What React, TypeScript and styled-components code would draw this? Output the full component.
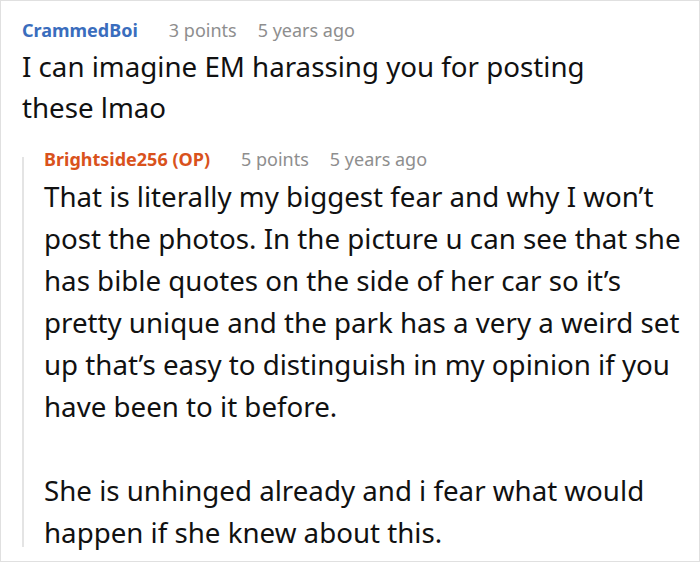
import React from "react";
import styled, { createGlobalStyle } from "styled-components";

const Global = createGlobalStyle`
  html, body { margin: 0; padding: 0; background: #fff; }
  body { font-family: "Noto Sans", "Open Sans", sans-serif; }
`;

const Frame = styled.div`
  box-sizing: border-box;
  width: 700px;
  height: 562px;
  border: 1px solid #e0e0e0;
  padding: 17px 0 0 21px;
  overflow: hidden;
`;

const Meta = styled.div`
  display: flex;
  align-items: baseline;
  gap: 21px;
  font-size: 18px;
  line-height: 24px;
  white-space: nowrap;
`;

const Author = styled.span<{ $tone: "blue" | "orange" }>`
  font-weight: 700;
  margin-right: 10px;
  color: ${(p) => (p.$tone === "blue" ? "#3a6dbd" : "#d9521c")};
`;

const Info = styled.span`
  color: #8e8e8e;
`;

const Body = styled.div<{ $lh: number }>`
  color: #111;
  font-size: 27.7px;
  line-height: ${(p) => p.$lh}px;
  margin-top: 4px;
  white-space: nowrap;
  p { margin: 0; }
  p + p { margin-top: ${(p) => p.$lh}px; }
`;

const Reply = styled.div`
  position: relative;
  margin-top: 19px;
  padding-left: 22px;
  &::before {
    content: "";
    position: absolute;
    left: 0;
    top: 10px;
    bottom: 6px;
    width: 2px;
    background: #e4e4e4;
  }
`;

export default function App() {
  return (
    <>
      <Global />
      <Frame>
        <Meta>
          <Author $tone="blue">CrammedBoi</Author>
          <Info>3 points</Info>
          <Info>5 years ago</Info>
        </Meta>
        <Body $lh={41}>
          <p>I can imagine EM harassing you for posting<br />these lmao</p>
        </Body>
        <Reply>
          <Meta>
            <Author $tone="orange">Brightside256 (OP)</Author>
            <Info>5 points</Info>
            <Info>5 years ago</Info>
          </Meta>
          <Body $lh={42}>
            <p>
              That is literally my biggest fear and why I won’t<br />
              post the photos. In the picture u can see that she<br />
              has bible quotes on the side of her car so it’s<br />
              pretty unique and the park has a very a weird set<br />
              up that’s easy to distinguish in my opinion if you<br />
              have been to it before.
            </p>
            <p>
              She is unhinged already and i fear what would<br />
              happen if she knew about this.
            </p>
          </Body>
        </Reply>
      </Frame>
    </>
  );
}
